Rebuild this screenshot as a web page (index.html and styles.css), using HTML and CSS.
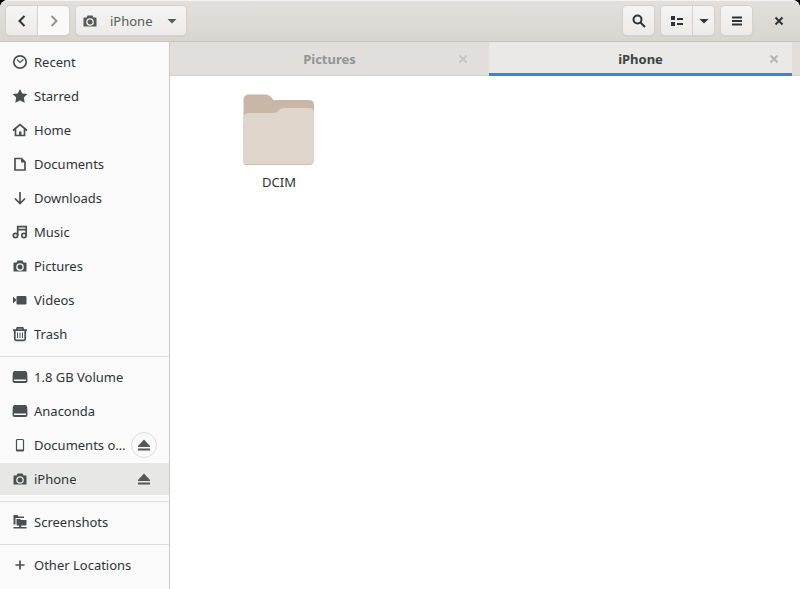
FILE: index.html
```html
<!DOCTYPE html>
<html lang="en">
<head>
<meta charset="utf-8">
<title>iPhone</title>
<link rel="stylesheet" href="styles.css">
</head>
<body>
<svg width="0" height="0" class="defs" aria-hidden="true">
  <symbol id="camera" viewBox="0 0 16 16"><path fill-rule="evenodd" d="M5.500 2.500h5l1 2H14q.5 0 .5.500V13q0 .5-.5.500H2q-.5 0-.5-.5V5q0-.5.5-.5h2.500zM8 5.200a3.800 3.800 0 1 0 0 7.600a3.800 3.800 0 0 0 0-7.600zM8 6.500a2.500 2.500 0 1 1 0 5a2.500 2.500 0 0 1 0-5z"/><circle cx="8" cy="9" r="1.200"/></symbol>
  <symbol id="eject" viewBox="0 0 16 16"><path d="M8 2.500L14 9v1H2V9zM2 11.500h12v2H2z"/></symbol>
  <symbol id="drive" viewBox="0 0 16 16"><path fill-rule="evenodd" d="M3 2h10q2 0 2.200 2l.3 8q0 2-2 2h-11q-2 0-2-2l.3-8Q1 2 3 2zM2 10.500v1.500h12v-1.500z"/></symbol>
  <symbol id="cross" viewBox="0 0 16 16"><path d="M4.500 4.500l7 7M11.500 4.500l-7 7" fill="none" stroke="currentColor" stroke-width="2"/></symbol>
  <symbol id="down" viewBox="0 0 16 16"><path d="M3.500 6h9L8 10.500z"/></symbol>
</svg>
<div class="window">
  <header class="bar">
    <div class="linked">
      <button class="btn" aria-label="Back"><svg class="icon" viewBox="0 0 16 16"><path class="line" d="M10.500 3L5.500 8l5 5"/></svg></button>
      <button class="btn off" aria-label="Forward" disabled><svg class="icon" viewBox="0 0 16 16"><path class="line" d="M5.500 3l5 5-5 5"/></svg></button>
    </div>
    <button class="btn path"><svg class="icon"><use href="#camera"/></svg><span>iPhone</span><svg class="icon"><use href="#down"/></svg></button>
    <span class="space"></span>
    <button class="btn" aria-label="Search"><svg class="icon" viewBox="0 0 16 16"><circle class="line" cx="6.500" cy="6.500" r="4"/><path class="line" d="M9.500 9.500l4.500 4.500"/></svg></button>
    <div class="linked">
      <button class="btn" aria-label="List view"><svg class="icon" viewBox="0 0 16 16"><path d="M2 3h4v4H2zM2 9h4v4H2zM8 5h6v2H8zM8 10h6v2H8z"/></svg></button>
      <button class="btn slim" aria-label="View options"><svg class="icon"><use href="#down"/></svg></button>
    </div>
    <button class="btn" aria-label="Menu"><svg class="icon" viewBox="0 0 16 16"><path d="M3 3.500h10v2H3zM3 7h10v2H3zM3 10.500h10v2H3z"/></svg></button>
    <button class="close" aria-label="Close"><svg class="icon"><use href="#cross"/></svg></button>
  </header>
  <div class="body">
    <nav class="side">
      <ul>
        <li><a href="#recent"><svg class="icon" viewBox="0 0 16 16"><circle class="line mid" cx="8" cy="8" r="6.200"/><path class="line thin" d="M5 5.500l3 3 3.500-3"/></svg><span>Recent</span></a></li>
        <li><a href="#starred"><svg class="icon" viewBox="0 0 16 16"><path d="M8 1l2.300 4.400 5.100.7-3.600 3.500.9 5.200L8 12.400l-4.700 2.400.9-5.200L.6 6.100l5.100-.7z"/></svg><span>Starred</span></a></li>
        <li><a href="#home"><svg class="icon" viewBox="0 0 16 16"><path class="line mid" d="M1 8.500l7-6 7 6M3.500 7v6.500h9V7"/><path d="M7 9.500h2.500V14H7z"/></svg><span>Home</span></a></li>
        <li><a href="#documents"><svg class="icon" viewBox="0 0 16 16"><path class="line mid" d="M3 2.500h6.500L13 6v8H3z"/><path d="M9 2v4.500h4.500z"/></svg><span>Documents</span></a></li>
        <li><a href="#downloads"><svg class="icon" viewBox="0 0 16 16"><path class="line mid" d="M8 2v11M3 8.500l5 5 5-5"/></svg><span>Downloads</span></a></li>
        <li><a href="#music"><svg class="icon" viewBox="0 0 16 16"><path class="line mid" d="M5.700 11.500V2.700h8.500v8.800M5.500 5.700H14"/><circle class="line mid" cx="3.500" cy="11.500" r="2.200"/><circle class="line mid" cx="12" cy="11.500" r="2.200"/></svg><span>Music</span></a></li>
        <li><a href="#pictures"><svg class="icon"><use href="#camera"/></svg><span>Pictures</span></a></li>
        <li><a href="#videos"><svg class="icon" viewBox="0 0 16 16"><path d="M1 4.500L4.500 8 1 11.500z"/><rect x="4.500" y="4" width="10" height="8.500" rx="1"/></svg><span>Videos</span></a></li>
        <li><a href="#trash"><svg class="icon" viewBox="0 0 16 16"><path class="line mid" d="M1 4.200h14M4.500 4l.8-2.200h5.400l.8 2.200M2.800 4.500v8.300q0 1.500 1.500 1.500h7.400q1.500 0 1.500-1.500V4.500"/><path class="line fine" d="M5.500 6.500v5.500M8 6.500v5.500M10.500 6.500v5.500"/></svg><span>Trash</span></a></li>
      </ul>
      <ul>
        <li><a href="#volume"><svg class="icon"><use href="#drive"/></svg><span>1.8 GB Volume</span></a></li>
        <li><a href="#anaconda"><svg class="icon"><use href="#drive"/></svg><span>Anaconda</span></a></li>
        <li><a href="#device"><svg class="icon" viewBox="0 0 16 16"><rect class="line thin" x="4.500" y="2.500" width="7" height="11.500" rx="1"/><path d="M4.500 12.500h7V14h-7z"/></svg><span>Documents on iPhone</span></a><button class="eject ring" aria-label="Eject documents"><svg class="icon"><use href="#eject"/></svg></button></li>
        <li class="current"><a href="#iphone"><svg class="icon"><use href="#camera"/></svg><span>iPhone</span></a><button class="eject" aria-label="Eject iPhone"><svg class="icon"><use href="#eject"/></svg></button></li>
      </ul>
      <ul>
        <li><a href="#screenshots"><svg class="icon" viewBox="0 0 16 16"><path d="M1.500 1h4l1 1.500h5.500v1.500H3.500v6.500h-2zM4.500 5h3.500l1 1h5.500v4.500q0 1-1 1h-8q-1 0-1-1zM7.200 11h2v2H14.500v1.500h-13V13h5.700z"/></svg><span>Screenshots</span></a></li>
      </ul>
      <ul>
        <li><a href="#other"><svg class="icon" viewBox="0 0 16 16"><path class="line mid" d="M8 3.500v9M3.500 8h9"/></svg><span>Other Locations</span></a></li>
      </ul>
    </nav>
    <main class="main">
      <div class="tabs">
        <div class="tab"><a href="#tab1">Pictures</a><button aria-label="Close Pictures tab"><svg class="icon"><use href="#cross"/></svg></button></div>
        <div class="tab active"><a href="#tab2">iPhone</a><button aria-label="Close iPhone tab"><svg class="icon"><use href="#cross"/></svg></button></div>
      </div>
      <div class="files">
        <a class="file" href="#dcim">
          <svg class="folder" viewBox="0 0 72 72"><path fill="#c8b6a6" d="M6 .5h17q3 0 5 2.500l2.500 3H66q5 0 5 5v40H.5V6q0-5.500 5.500-5.500z"/><path fill="#cdbfb2" d="M.5 30h70.500v36q0 5-5.500 5H2.500q-2 0-2-2z"/><path fill="#ded5cb" d="M6 19h25q2 0 3.500-1.500l2-2q1.500-1.500 4-1.500H66q5 0 5 5.500V65q0 5-5.500 5H.5V24.500Q.5 19 6 19z"/></svg>
          <span>DCIM</span>
        </a>
      </div>
    </main>
  </div>
</div>
</body>
</html>
```
FILE: styles.css
```css
* { box-sizing: border-box; }
body {
  margin: 0;
  background: #000;
  color: #2e3436;
  font: 13px/20px "Noto Sans", sans-serif;
}
button {
  margin: 0;
  padding: 0;
  border: 0;
  background: none;
  color: inherit;
  font: inherit;
}
a { color: inherit; text-decoration: none; }
.defs { display: none; }
.icon { display: block; flex: none; width: 16px; height: 16px; fill: currentColor; }
.line { fill: none; stroke: currentColor; stroke-width: 2; }
.mid { stroke-width: 1.7; }
.thin { stroke-width: 1.2; }
.fine { stroke-width: 1; }

.window {
  display: flex;
  flex-direction: column;
  min-height: 100vh;
  overflow: hidden;
  border-radius: 8px 8px 0 0;
  background: #fff;
}
.bar {
  display: flex;
  align-items: center;
  gap: 7px;
  height: 42px;
  padding: 0 6px;
  border-bottom: 1px solid #c8c0b9;
  background: linear-gradient(#e2dfdc, #d9d5d1);
  box-shadow: inset 0 1px #f4f2f0;
}
.linked { display: flex; }
.btn {
  display: flex;
  align-items: center;
  justify-content: center;
  width: 31px;
  height: 29px;
  border-radius: 4px;
  background: linear-gradient(#f5f4f3, #edebe9);
  box-shadow: 0 0 0 1px #d6d1cc, 0 1px 2px #c2bbb5;
}
.linked .btn:first-child { border-radius: 4px 0 0 4px; }
.linked .btn:last-child { margin-left: 1px; border-radius: 0 4px 4px 0; }
.off { background: #faf9f8; color: #929595; }
.slim { width: 21px; }
.path { gap: 12px; width: auto; padding: 0 6px; color: #555a5b; }
.space { flex: 1; }
.close { margin: 0 7px 0 12px; }

.body { display: flex; flex: 1; }
.side {
  flex: none;
  width: 170px;
  border-right: 1px solid #d0cac4;
  background: #fafafa;
}
.side ul {
  display: grid;
  grid-template-columns: minmax(0, 1fr);
  gap: 2px;
  margin: 0;
  padding: 4px 0 6px;
  list-style: none;
}
.side ul + ul { border-top: 1px solid #e0dfde; }
.side li { display: flex; align-items: center; height: 32px; padding: 0 12px; }
.side a { display: flex; flex: 1; align-items: center; gap: 6px; min-width: 0; }
.side a .icon { color: #4c4f50; }
.side a span { overflow: hidden; text-overflow: ellipsis; white-space: nowrap; }
.current { background: #e7e7e5; }
.eject {
  display: grid;
  flex: none;
  place-items: center;
  width: 26px;
  height: 26px;
  margin-left: 2px;
  border-radius: 50%;
  color: #555858;
}
.ring { border: 1px solid #e0dcdc; }

.main { flex: 1; min-width: 0; }
.tabs {
  display: grid;
  grid-template-columns: 319fr 303fr;
  height: 34px;
  padding-right: 8px;
  border-bottom: 1px solid #d5d0cc;
  background: #e1dedb;
}
.tab {
  display: flex;
  align-items: center;
  padding: 0 18px;
  color: #929595;
  font-weight: 700;
}
.tab a { flex: 1; padding-left: 16px; text-align: center; }
.tab button { color: #c8c6c4; }
.tab.active {
  height: 34px;
  padding: 2px 10px 0;
  border-bottom: 3px solid #3584e4;
  background: #eae9e7;
  color: #3d4244;
}
.tab.active button { color: #b3b3b1; }
.files { display: flex; padding: 18px 54px; }
.file { display: grid; justify-items: center; gap: 6px; width: 110px; }
.folder { width: 72px; height: 72px; }
```
